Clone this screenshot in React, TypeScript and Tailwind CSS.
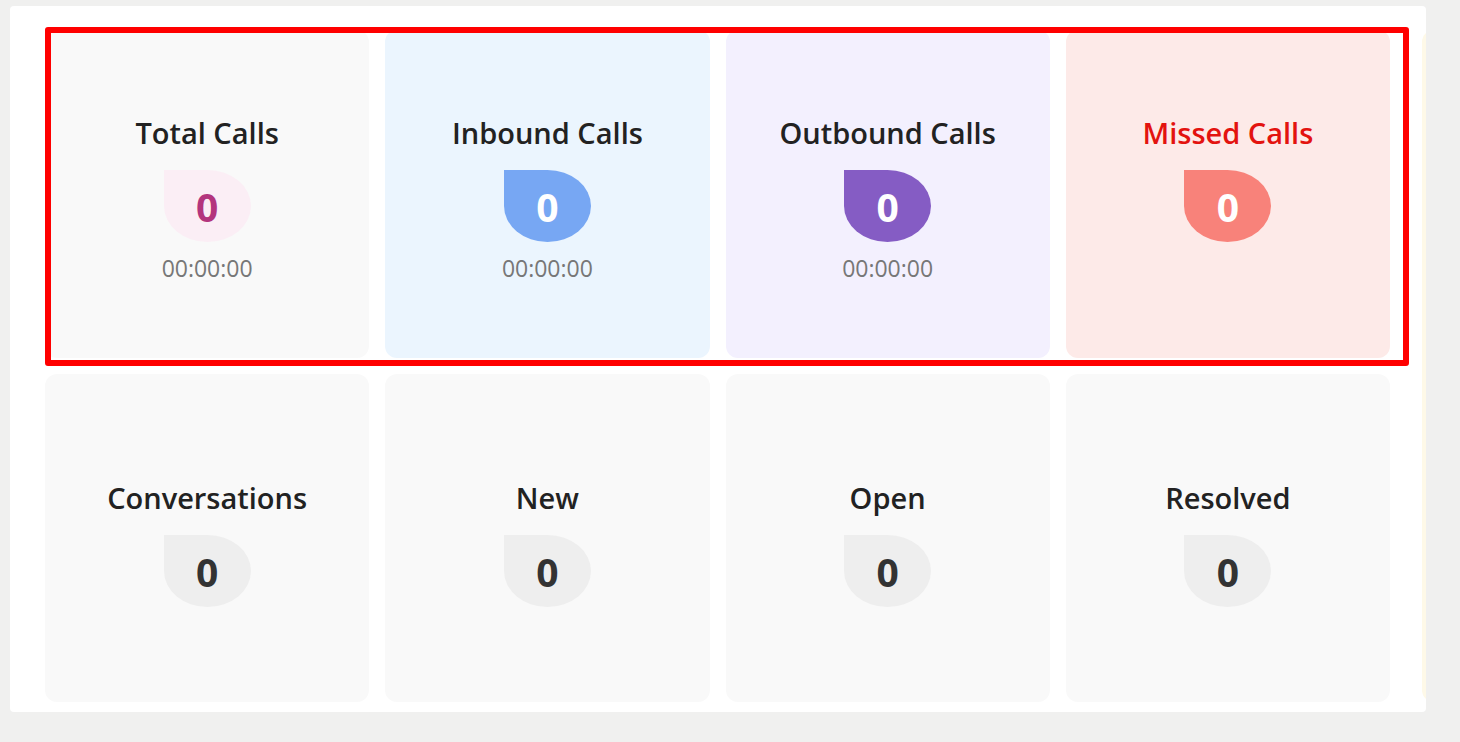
import React from "react";

type Card = {
  title: string;
  time?: string;
  cardBg: string;
  badgeBg: string;
  numColor: string;
  titleColor: string;
};

const topRow: Card[] = [
  { title: "Total Calls", time: "00:00:00", cardBg: "bg-[#f9f9f9]", badgeBg: "bg-[#fbeef5]", numColor: "text-[#b3357d]", titleColor: "text-[#222222]" },
  { title: "Inbound Calls", time: "00:00:00", cardBg: "bg-[#ebf5fe]", badgeBg: "bg-[#77a7f3]", numColor: "text-white", titleColor: "text-[#222222]" },
  { title: "Outbound Calls", time: "00:00:00", cardBg: "bg-[#f3f0fe]", badgeBg: "bg-[#855cc4]", numColor: "text-white", titleColor: "text-[#222222]" },
  { title: "Missed Calls", time: "", cardBg: "bg-[#fdeae8]", badgeBg: "bg-[#f8827a]", numColor: "text-white", titleColor: "text-[#e3130f]" },
];

const bottomRow: Card[] = [
  { title: "Conversations", cardBg: "bg-[#f9f9f9]", badgeBg: "bg-[#eeeeee]", numColor: "text-[#333333]", titleColor: "text-[#222222]" },
  { title: "New", cardBg: "bg-[#f9f9f9]", badgeBg: "bg-[#eeeeee]", numColor: "text-[#333333]", titleColor: "text-[#222222]" },
  { title: "Open", cardBg: "bg-[#f9f9f9]", badgeBg: "bg-[#eeeeee]", numColor: "text-[#333333]", titleColor: "text-[#222222]" },
  { title: "Resolved", cardBg: "bg-[#f9f9f9]", badgeBg: "bg-[#eeeeee]", numColor: "text-[#333333]", titleColor: "text-[#222222]" },
];

function StatCard({ c }: { c: Card }) {
  return (
    <div className={`h-[328px] rounded-xl ${c.cardBg} flex flex-col items-center justify-center`}>
      <div className={`h-[56px] flex items-center text-[29px] font-semibold leading-none ${c.titleColor}`}>{c.title}</div>
      <div
        className={`mt-[10px] w-[87px] h-[72px] rounded-[0_50%_50%_50%] ${c.badgeBg} flex items-center justify-center`}
      >
        <span className={`text-[39px] font-bold leading-none ${c.numColor}`}>0</span>
      </div>
      {c.time !== undefined && (
        <div className="mt-[10px] h-[32px] flex items-center text-[23px] text-[#777777] leading-none">{c.time}</div>
      )}
    </div>
  );
}

export default function App() {
  return (
    <div className="w-[1460px] h-[742px] bg-[#f0f0ef] pt-[6px] pl-[10px] relative overflow-hidden" style={{ fontFamily: '"Open Sans", "Noto Sans", sans-serif' }}>
      <div className="w-[1416px] h-[706px] bg-white rounded-[4px] overflow-hidden pt-[24px] pl-[35px] flex items-start">
        <div className="w-[1345px] shrink-0 grid grid-cols-4 gap-4 content-start">
          {topRow.map((c) => (
            <StatCard key={c.title} c={c} />
          ))}
          {bottomRow.map((c) => (
            <StatCard key={c.title} c={c} />
          ))}
        </div>
        <div className="ml-[32px] w-[300px] h-[672px] shrink-0 rounded-xl bg-[#fef9e8]" />
      </div>
      <div className="absolute left-[45px] top-[27px] w-[1364px] h-[339px] border-[6px] border-[#ff0000] rounded-[3px] pointer-events-none" />
    </div>
  );
}
